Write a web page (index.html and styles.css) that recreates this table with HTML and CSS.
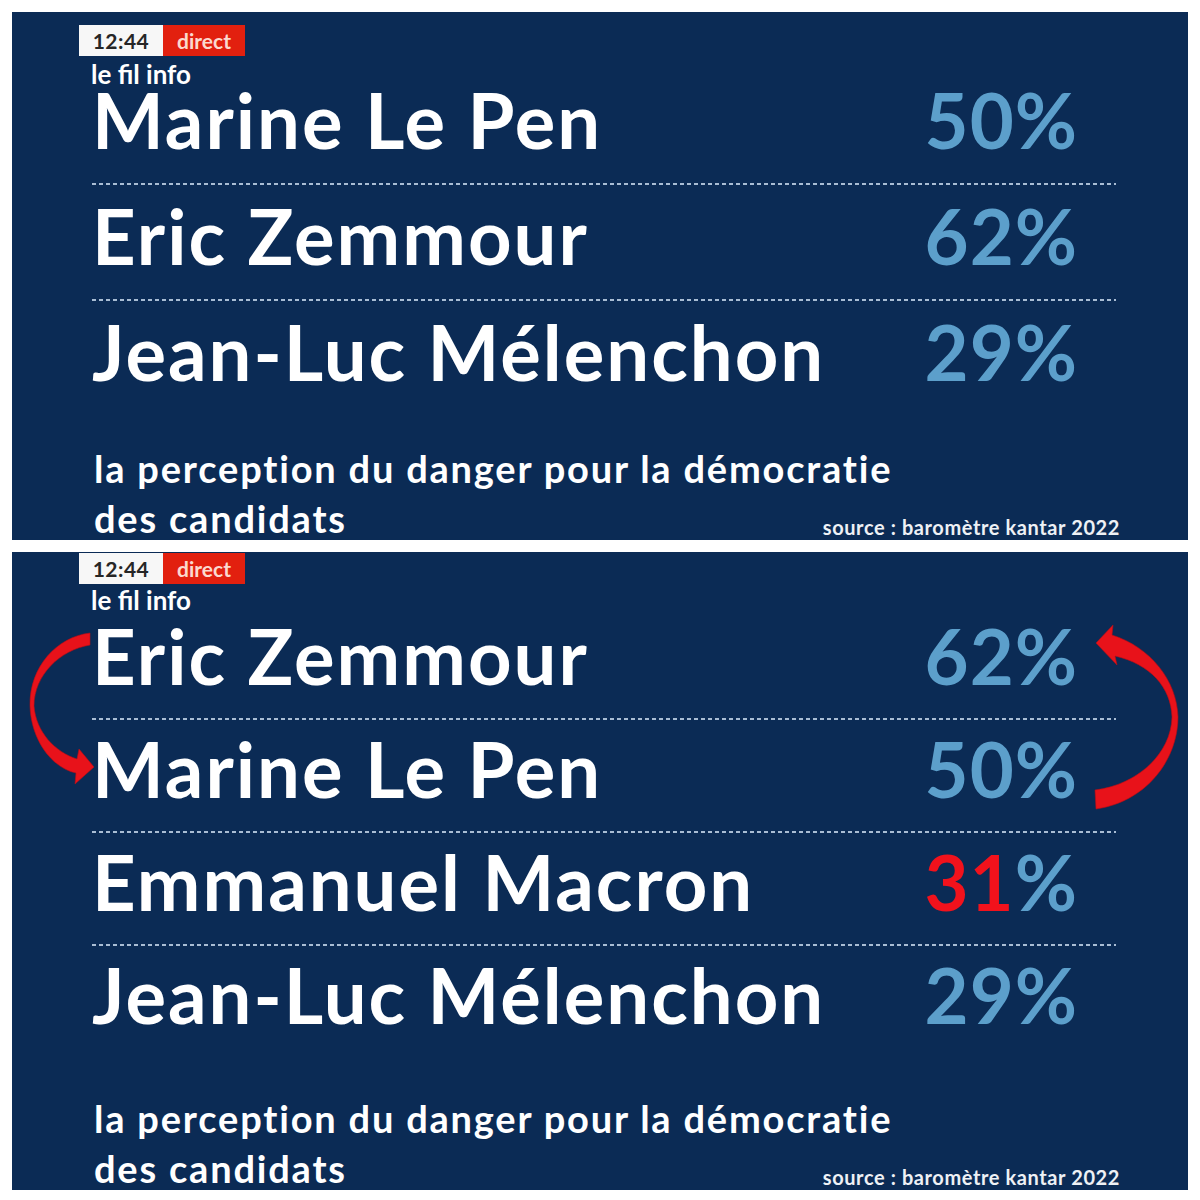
FILE: index.html
```html
<!DOCTYPE html>
<html lang="fr">
<head>
<meta charset="utf-8">
<title>le fil info</title>
<link rel="stylesheet" href="styles.css">
</head>
<body>
<main class="page">
  <section class="panel panel-a">
    <div class="badge"><span class="time">12:44</span><span class="live">direct</span></div>
    <div class="feed">le fil info</div>
    <div class="rows">
      <div class="row"><span class="name">Marine Le Pen</span><span class="pct">50%</span></div>
      <div class="row"><span class="name">Eric Zemmour</span><span class="pct">62%</span></div>
      <div class="row"><span class="name">Jean-Luc Mélenchon</span><span class="pct">29%</span></div>
    </div>
    <div class="foot">
      <p class="caption">la perception du danger pour la démocratie</p>
      <div class="foot-end">
        <p class="caption">des candidats</p>
        <span class="source">source : baromètre kantar 2022</span>
      </div>
    </div>
  </section>

  <section class="panel panel-b">
    <div class="badge"><span class="time">12:44</span><span class="live">direct</span></div>
    <div class="feed">le fil info</div>
    <div class="rows">
      <div class="row"><span class="name">Eric Zemmour</span><span class="pct">62%</span></div>
      <div class="row"><span class="name">Marine Le Pen</span><span class="pct">50%</span></div>
      <div class="row"><span class="name">Emmanuel Macron</span><span class="pct"><span class="hot">31</span>%</span></div>
      <div class="row"><span class="name">Jean-Luc Mélenchon</span><span class="pct">29%</span></div>
    </div>
    <div class="foot">
      <p class="caption">la perception du danger pour la démocratie</p>
      <div class="foot-end">
        <p class="caption">des candidats</p>
        <span class="source">source : baromètre kantar 2022</span>
      </div>
    </div>
    <svg class="arrows" viewBox="0 0 1176 638" width="1176" height="638" aria-hidden="true">
      <g transform="translate(-12 -552)">
        <path class="arrow" d="M 90 633 C 56 637, 29 668, 30 706 C 31 740, 52 768, 76 773 L 75 784 L 94 767 L 79 749 L 77 759 C 55 752, 36 732, 34 706 C 34 675, 60 650, 90 645 Z"/>
        <path class="arrow" d="M 1096 643 L 1113 625 L 1112 635 C 1150 647, 1177 680, 1178 717 C 1178 760, 1146 802, 1096 809 L 1095 790 C 1136 785, 1171 755, 1172 717 C 1171 687, 1150 664, 1115 656 L 1117 665 Z"/>
      </g>
    </svg>
  </section>
</main>
</body>
</html>
```

FILE: styles.css
```css
* { box-sizing: border-box; }

html, body {
  margin: 0;
  padding: 0;
  background: #ffffff;
}

body {
  font-family: Lato, "Open Sans", "DejaVu Sans", sans-serif;
  color: #ffffff;
}

.page {
  width: 1200px;
  padding: 12px 12px 10px;
  display: flex;
  flex-direction: column;
  gap: 12px;
}

.panel {
  position: relative;
  background: #0b2b55;
  padding: 0 72px 0 80px;
  display: flex;
  flex-direction: column;
  overflow: hidden;
}

.panel-a {
  height: 528px;
  padding-top: 13px;
}

.panel-b {
  height: 638px;
  padding-top: 1px;
}

.badge {
  display: flex;
  height: 31px;
  margin-left: -13px;
  font-weight: 700;
  font-size: 21px;
  line-height: 31px;
}

.time {
  width: 84px;
  background: #f7f7f7;
  color: #262626;
  text-align: center;
  letter-spacing: 0.5px;
}

.live {
  width: 82px;
  background: #e2200f;
  color: #fbd9cf;
  text-align: center;
}

.feed {
  font-weight: 700;
  font-size: 26px;
  line-height: 30px;
  margin: 3px 0 1px -1px;
}

.panel-b .feed {
  margin: 1px 0 11px -1px;
}

.rows {
  display: flex;
  flex-direction: column;
}

.row {
  display: flex;
  justify-content: space-between;
  align-items: baseline;
  padding: 21px 38px 35px 0;
  font-weight: 700;
  font-size: 76px;
  line-height: 60px;
  letter-spacing: 2px;
  background-image: repeating-linear-gradient(90deg, #a9bdd4 0 4px, transparent 4px 7px);
  background-size: 100% 2px;
  background-position: left bottom;
  background-repeat: no-repeat;
}

.panel-b .row {
  padding-top: 19px;
  padding-bottom: 34px;
}

.row:first-child,
.panel-b .row:first-child {
  padding-top: 0;
}

.row:last-child {
  background-image: none;
}

.name {
  color: #ffffff;
  white-space: nowrap;
}

.pct {
  color: #5c9fcb;
  letter-spacing: 1px;
  white-space: nowrap;
}

.hot {
  color: #f2121c;
}

.foot {
  margin-top: auto;
  margin-bottom: -3px;
  display: flex;
  flex-direction: column;
}

.foot-end {
  display: flex;
  justify-content: space-between;
  align-items: flex-end;
}

.caption {
  margin: 0 0 0 2px;
  font-weight: 700;
  font-size: 38px;
  line-height: 50px;
  letter-spacing: 1.8px;
  white-space: nowrap;
}

.source {
  font-weight: 700;
  font-size: 20px;
  line-height: 24px;
  letter-spacing: 0.6px;
  color: #eef1f5;
  white-space: nowrap;
  margin-right: -4px;
  margin-bottom: 4px;
}

.arrows {
  position: absolute;
  left: 0;
  top: 0;
  pointer-events: none;
}

.arrow {
  fill: #e8121a;
  stroke: #b80e14;
  stroke-width: 0.6;
}
```
